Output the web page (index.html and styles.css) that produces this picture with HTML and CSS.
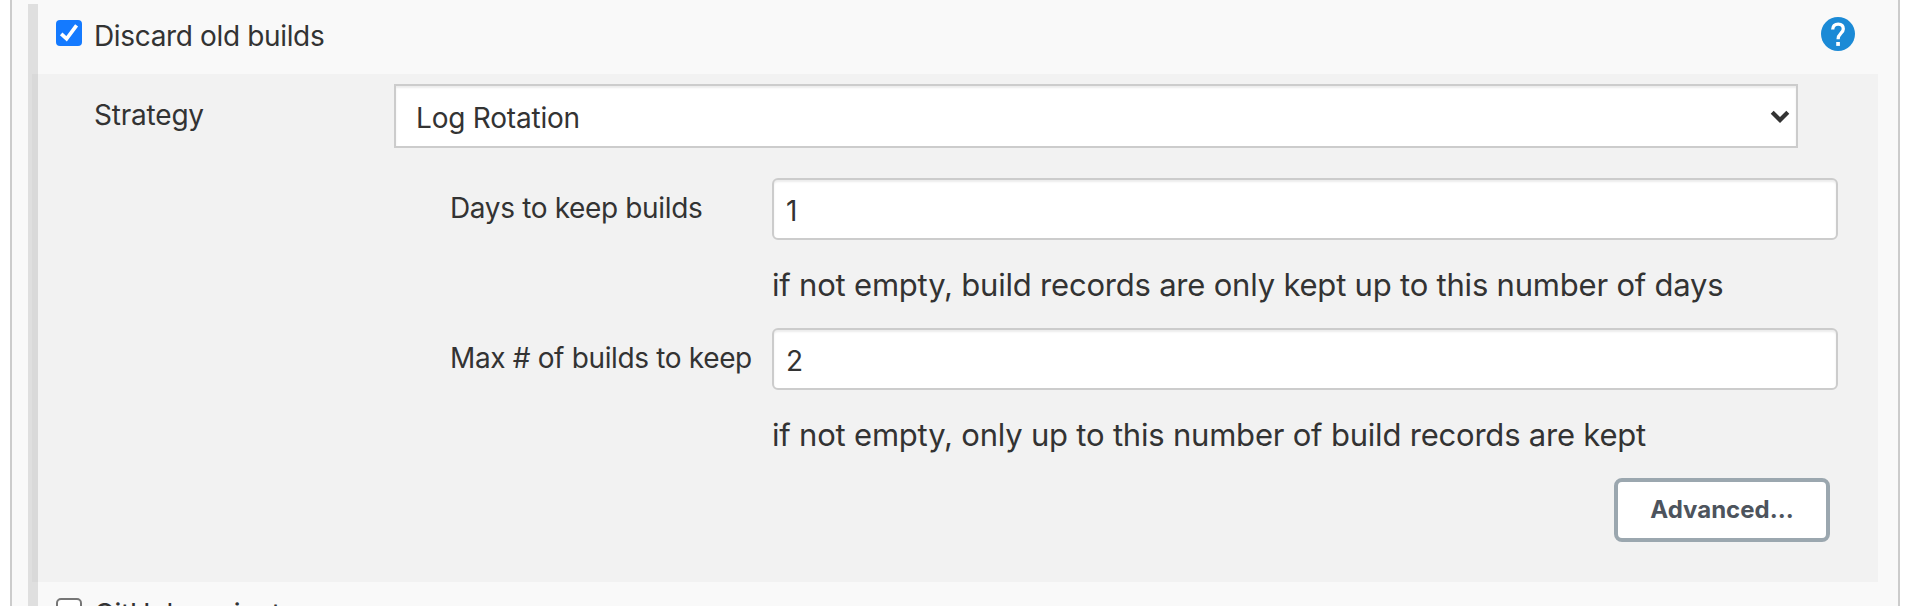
FILE: index.html
```html
<!DOCTYPE html>
<html lang="en">
<head>
<meta charset="utf-8">
<title>Job configuration</title>
<link rel="stylesheet" href="styles.css">
</head>
<body>
<main class="panel">
  <div class="option option-first">
    <span class="checkbox checked"><svg width="26" height="26" viewBox="0 0 26 26"><path d="M5.2 13.8 10.6 18.8 20.6 5.4" fill="none" stroke="#fff" stroke-width="3.7"/></svg></span>
    <label class="option-label">Discard old builds</label>
    <svg class="help" width="34" height="34" viewBox="0 0 34 34"><circle cx="17" cy="17" r="17" fill="#1b8ad6"/><path d="M11.7 12.4C11.7 9 13.8 7.1 17.2 7.1S22.3 9 22.3 12C22.3 16.1 17.1 16.5 17.1 22.2" fill="none" stroke="#fff" stroke-width="3.3"/><path d="M15.2 25h3.7v3.9h-3.7z" fill="#fff"/></svg>
  </div>
  <section class="block">
    <div class="strategy">
      <label class="label strategy-label">Strategy</label>
      <div class="select"><span class="select-text">Log Rotation</span><svg class="chevron" width="20" height="14" viewBox="0 0 20 14"><path d="M2.2 2.2 10 10 17.8 2.2" fill="none" stroke="#333" stroke-width="4.2"/></svg></div>
    </div>
    <div class="field">
      <label class="label">Days to keep builds</label>
      <div class="input">1</div>
      <p class="description">if not empty, build records are only kept up to this number of days</p>
    </div>
    <div class="field">
      <label class="label">Max # of builds to keep</label>
      <div class="input">2</div>
      <p class="description">if not empty, only up to this number of build records are kept</p>
    </div>
    <div class="actions"><button class="button">Advanced...</button></div>
  </section>
  <div class="option option-next">
    <span class="checkbox"></span>
    <label class="option-label">GitHub project</label>
  </div>
</main>
</body>
</html>
```
FILE: styles.css
```css
* { box-sizing: border-box; }
html { overflow: hidden; }
body {
  margin: 0;
  height: 606px;
  overflow: hidden;
  background: #fff;
  color: #333;
  font: 28px/40px Inter, "Liberation Sans", sans-serif;
  letter-spacing: -0.35px;
}
.panel {
  position: relative;
  height: 606px;
  margin: 0 26px 0 10px;
  border: solid #ccc;
  border-width: 0 2px;
  background: #f9f9f9;
  overflow: hidden;
}
.panel::before {
  content: "";
  position: absolute;
  top: 4px;
  bottom: 0;
  left: 16px;
  width: 10px;
  background: rgba(0, 0, 0, 0.1);
}
.option {
  display: flex;
  align-items: flex-start;
  height: 74px;
  padding-left: 44px;
}
.option-first { padding-top: 16px; padding-right: 43px; }
.option-next { padding-top: 12px; }
.checkbox {
  width: 26px;
  height: 26px;
  margin-top: 4px;
  border: 2px solid #767676;
  border-radius: 5px;
  background: #fff;
}
.checkbox.checked { border: 0; border-radius: 4px; background: #147aff; }
.checkbox svg { display: block; }
.option-label { margin-left: 12px; }
.help { margin: 1px 0 0 auto; }
.block {
  height: 508px;
  margin: 0 20px;
  padding: 10px 40px 40px 62px;
  background: #f2f2f2;
}
.strategy {
  display: grid;
  grid-template-columns: 300px 1404px;
  height: 64px;
  margin-bottom: 30px;
}
.strategy-label { padding-top: 11px; letter-spacing: -0.2px; }
.select {
  display: flex;
  align-items: center;
  justify-content: space-between;
  border: 2px solid #ccc;
  background: #fff;
  box-shadow: inset 0 2px 2px rgba(0, 0, 0, 0.075);
  padding: 0 6px 0 20px;
  letter-spacing: -0.2px;
}
.select-text { padding-top: 4px; }
.chevron { margin-top: 2px; }
.field {
  display: grid;
  grid-template-columns: 322px 1066px;
  grid-template-rows: 62px 40px;
  row-gap: 25px;
  margin: 0 0 23px 356px;
}
.label { white-space: nowrap; }
.field .label { padding-top: 10px; }
.input {
  height: 62px;
  padding: 2px 12px 0;
  border: 2px solid #ccc;
  border-radius: 6px;
  background: #fff;
  box-shadow: inset 0 2px 2px rgba(0, 0, 0, 0.075);
  line-height: 58px;
}
.description {
  grid-column: 2;
  margin: 0;
  font-size: 31px;
  letter-spacing: -0.205px;
  white-space: nowrap;
}
.actions { display: flex; justify-content: flex-end; padding-right: 8px; }
.button {
  width: 216px;
  height: 64px;
  padding: 0;
  border: 4px solid #9ba7af;
  border-radius: 8px;
  background: #fff;
  color: #4d545d;
  font: 700 24px/56px Inter, "Liberation Sans", sans-serif;
  letter-spacing: 0;
}
```
